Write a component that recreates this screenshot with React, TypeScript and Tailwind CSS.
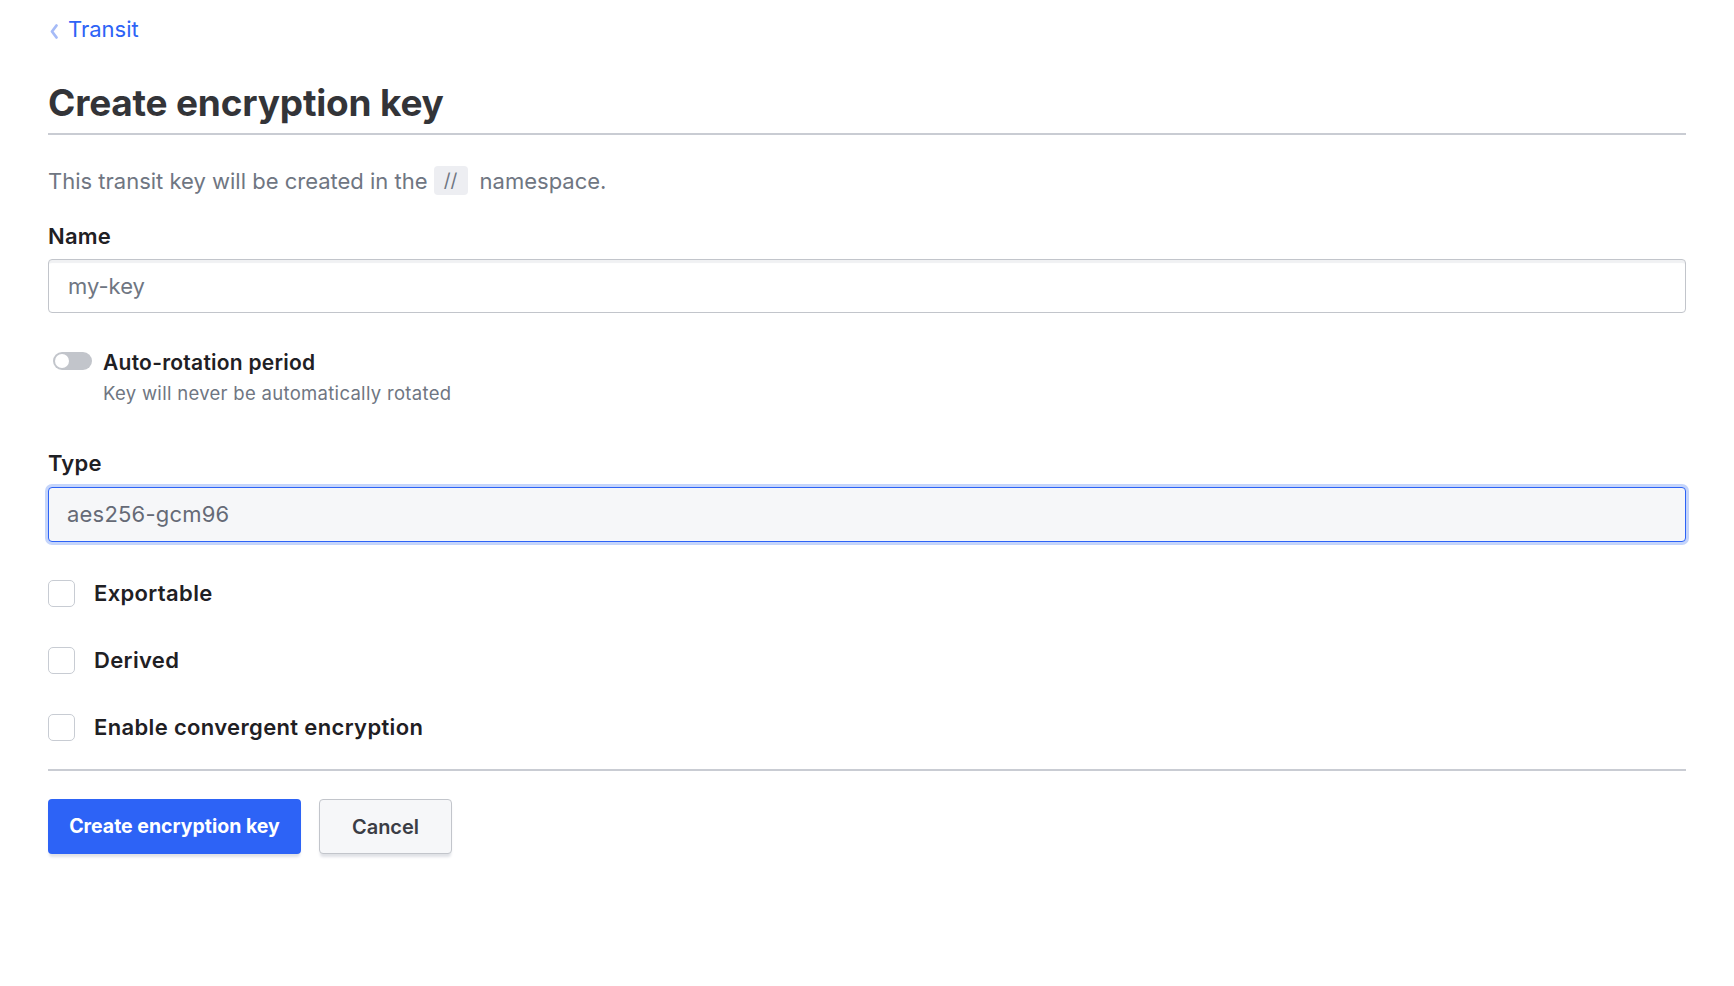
import { useState } from "react";

const FONT = { fontFamily: "Inter, 'Noto Sans', sans-serif" };

function Toggle({ on, onChange }: { on: boolean; onChange: (v: boolean) => void }) {
  return (
    <button
      type="button"
      onClick={() => onChange(!on)}
      className={`relative w-[39px] h-[18px] rounded-full shrink-0 ${on ? "bg-[#2d63f6]" : "bg-[#c2c5cb]"}`}
      aria-pressed={on}
    >
      <span
        className={`absolute top-[2px] w-[14px] h-[14px] rounded-full bg-white ${on ? "left-[23px]" : "left-[2px]"}`}
      />
    </button>
  );
}

function Check({ label, checked, onChange }: { label: string; checked: boolean; onChange: (v: boolean) => void }) {
  return (
    <label className="flex items-center h-[28px] cursor-pointer">
      <span
        onClick={() => onChange(!checked)}
        className={`w-[27px] h-[27px] rounded-[5px] border shrink-0 ${checked ? "bg-[#2d63f6] border-[#2d63f6]" : "bg-white border-[#c8ccd3]"}`}
      />
      <span className="ml-[19px] text-[22px] tracking-[0.35px] font-semibold text-[#1f2024] leading-[28px]">{label}</span>
    </label>
  );
}

export default function App() {
  const [rotate, setRotate] = useState(false);
  const [exportable, setExportable] = useState(false);
  const [derived, setDerived] = useState(false);
  const [convergent, setConvergent] = useState(false);

  return (
    <div className="min-h-screen bg-white px-[48px]" style={FONT}>
      {/* breadcrumb */}
      <div className="pt-[14px] flex items-center h-[44px]">
        <svg width="12" height="18" viewBox="0 0 12 18" className="mt-[3px]">
          <path d="M8.5 3.5 L4 9.5 L8.5 15.5" fill="none" stroke="#a6bbf7" strokeWidth="2.8" strokeLinecap="round" strokeLinejoin="round" />
        </svg>
        <a href="#" className="ml-[8px] text-[22px] leading-[30px] text-[#2d63f6]">Transit</a>
      </div>

      {/* title */}
      <div className="mt-[36px] border-b-2 border-[#c9ccd3] pb-[7px]">
        <h1 className="text-[37px] leading-[46px] font-bold text-[#333438] tracking-[-0.2px]">Create encryption key</h1>
      </div>

      <p className="mt-[31px] text-[22px] leading-[28px] text-[#6f7682] flex items-center">
        This transit key will be created in the
        <span className="ml-[6px] mr-[12px] inline-flex items-center justify-center w-[34px] h-[29px] rounded-[4px] bg-[#edeef2] text-[19px] text-[#6f7682]">//</span>
        namespace.
      </p>

      {/* name */}
      <div className="mt-[27px] text-[22px] tracking-[0.2px] leading-[28px] font-semibold text-[#1f2024]">Name</div>
      <input
        defaultValue=""
        placeholder="my-key"
        className="mt-[9px] block w-full h-[54px] rounded-[4px] border border-[#c2c5cb] px-[19px] text-[22px] text-[#3b3d45] placeholder:text-[#6f7682] shadow-[inset_0_4px_1px_-1px_#f0f1f3] outline-none"
      />

      {/* rotation */}
      <div className="mt-[36px] flex items-start">
        <div className="ml-[5px] mt-[3px]">
          <Toggle on={rotate} onChange={setRotate} />
        </div>
        <div className="ml-[11px]">
          <div className="text-[21px] tracking-[0.25px] leading-[28px] font-semibold text-[#1f2024]">Auto-rotation period</div>
          <div className="mt-[3px] text-[18.5px] tracking-[0.3px] leading-[26px] text-[#6f7682]">Key will never be automatically rotated</div>
        </div>
      </div>

      {/* type */}
      <div className="mt-[43px] text-[22px] tracking-[0.2px] leading-[28px] font-semibold text-[#1f2024]">Type</div>
      <div className="mt-[10px] h-[55px] rounded-[4px] border-[1.5px] border-[#2d63f6] ring-[3px] ring-[#c5d5fb] bg-[#f6f7f9] px-[18px] flex items-center text-[22px] tracking-[0.2px] text-[#656a76]">
        aes256-gcm96
      </div>

      {/* options */}
      <div className="mt-[37px] flex flex-col gap-[39px]">
        <Check label="Exportable" checked={exportable} onChange={setExportable} />
        <Check label="Derived" checked={derived} onChange={setDerived} />
        <Check label="Enable convergent encryption" checked={convergent} onChange={setConvergent} />
      </div>

      <div className="mt-[28px] border-t-2 border-[#c9ccd3]" />

      {/* actions */}
      <div className="mt-[28px] flex gap-[18px]">
        <button className="h-[55px] w-[253px] rounded-[4px] bg-[#2d63f6] text-white text-[19.5px] font-bold shadow-[0_4px_3px_-1px_#dfe1e6]">
          Create encryption key
        </button>
        <button className="h-[55px] w-[133px] rounded-[4px] border border-[#c2c5cb] bg-[#f6f7f9] text-[#3b3d45] text-[20px] font-semibold shadow-[0_4px_3px_-1px_#dfe1e6]">
          Cancel
        </button>
      </div>
    </div>
  );
}
